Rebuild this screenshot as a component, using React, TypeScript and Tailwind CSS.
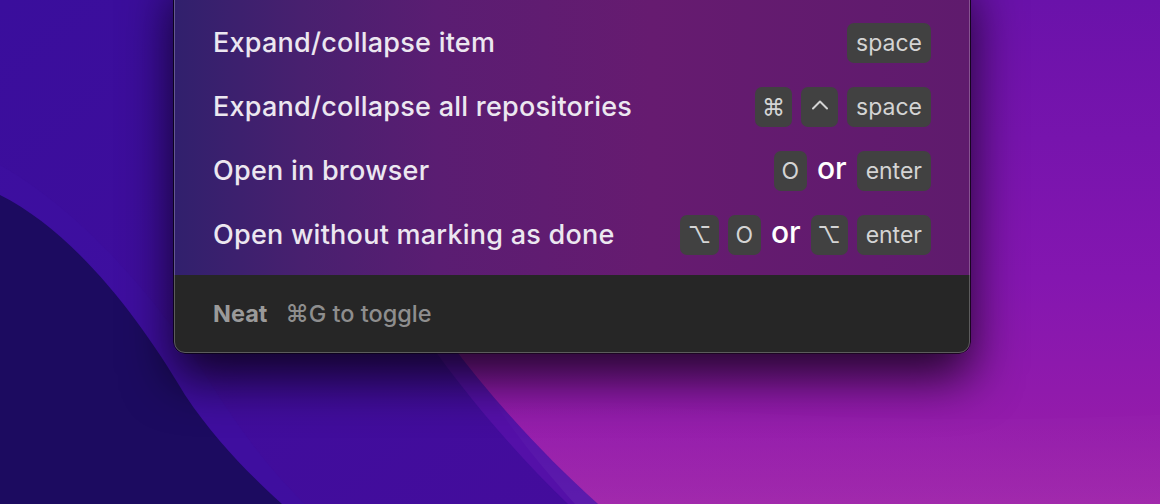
import React from "react";

function Key({ children, w }: { children: React.ReactNode; w?: string }) {
  return (
    <span
      className={`flex h-[40px] items-center justify-center rounded-[7px] bg-[#414141] text-[23px] leading-none text-[#d4d4d4] ${
        w ?? "px-[9px]"
      }`}
    >
      {children}
    </span>
  );
}

function Or() {
  return <span className="px-[1px] text-[30px] font-medium leading-none text-white -mt-[6px]">or</span>;
}

function Caret() {
  return (
    <svg width="18" height="11" viewBox="0 0 18 11" className="-mt-[6px]">
      <polyline points="2,9.5 9,2.5 16,9.5" fill="none" stroke="#d4d4d4" strokeWidth="2" strokeLinecap="round" strokeLinejoin="round" />
    </svg>
  );
}

function Row({ label, children }: { label: string; children: React.ReactNode }) {
  return (
    <div className="flex h-16 items-center justify-between">
      <span className="text-[27px] font-medium tracking-[0.25px] text-[#ece7f0]">{label}</span>
      <div className="flex items-center gap-[9px]">{children}</div>
    </div>
  );
}

function Wallpaper() {
  return (
    <svg className="absolute inset-0" width="1160" height="504" viewBox="0 0 1160 504">
      <defs>
        <linearGradient id="base" x1="0" y1="0" x2="1" y2="0">
          <stop offset="0" stopColor="#300d8f" />
          <stop offset="0.3" stopColor="#3a0f9e" />
          <stop offset="0.7" stopColor="#5510a6" />
          <stop offset="1" stopColor="#6c13aa" />
        </linearGradient>
        <linearGradient id="pink" x1="0" y1="0" x2="0" y2="1">
          <stop offset="0" stopColor="#6a12aa" />
          <stop offset="0.55" stopColor="#8416b0" />
          <stop offset="1" stopColor="#9c1ea8" />
        </linearGradient>
        <linearGradient id="blue" x1="0" y1="0" x2="1" y2="1">
          <stop offset="0" stopColor="#3a0e9c" />
          <stop offset="1" stopColor="#440c9c" />
        </linearGradient>
        <linearGradient id="wave" x1="0" y1="0" x2="0" y2="1">
          <stop offset="0" stopColor="#ffffff" stopOpacity="0" />
          <stop offset="1" stopColor="#ffffff" stopOpacity="0.05" />
        </linearGradient>
      </defs>
      <rect width="1160" height="504" fill="url(#base)" />
      <path d="M280 0 C 360 200, 460 380, 600 504 L 0 504 L 0 0 Z" fill="url(#blue)" />
      <path d="M330 180 C 390 300, 480 420, 568 504 L 598 504 C 515 430, 420 320, 362 200 Z" fill="#5410a8" />
      <path d="M362 200 C 420 320, 515 430, 598 504 L 1160 504 L 1160 0 L 650 0 Z" fill="url(#pink)" />
      <path d="M490 395 C 620 400, 820 430, 1160 415 L 1160 504 L 575 504 C 545 470, 515 435, 490 395 Z" fill="url(#wave)" />
      <path d="M0 165 C 80 210, 160 300, 215 390 C 250 445, 280 480, 305 504 L 0 504 Z" fill="#3d10a2" opacity="0.5" />
      <path d="M0 195 C 70 230, 135 310, 185 395 C 215 440, 250 475, 282 504 L 0 504 Z" fill="#1c0b60" />
    </svg>
  );
}

export default function App() {
  return (
    <div className="relative h-[504px] w-[1160px] overflow-hidden font-['Inter','Noto_Sans',sans-serif]">
      <Wallpaper />
      <div className="relative ml-[173px] -mt-[30px] w-[798px] overflow-hidden rounded-b-[12px] border border-black/80 shadow-[0_24px_50px_rgba(0,0,0,0.75)]">
        <div className="bg-[linear-gradient(90deg,#31206d_0%,#48206f_16%,#5a1d72_33%,#661b70_60%,#5f1b6d_100%)] px-[39px] pt-[40px] pb-2">
          <Row label="Expand/collapse item">
            <Key>space</Key>
          </Row>
          <Row label="Expand/collapse all repositories">
            <Key w="w-[37px]">⌘</Key>
            <Key w="w-[37px]">
              <Caret />
            </Key>
            <Key>space</Key>
          </Row>
          <Row label="Open in browser">
            <Key w="w-[33px]">O</Key>
            <Or />
            <Key>enter</Key>
          </Row>
          <Row label="Open without marking as done">
            <Key w="w-[39px]">⌥</Key>
            <Key w="w-[33px]">O</Key>
            <Or />
            <Key w="w-[37px]">⌥</Key>
            <Key>enter</Key>
          </Row>
        </div>
        <div className="flex h-[78px] items-center gap-[18px] bg-[#262626] px-[39px]">
          <span className="text-[23.5px] font-bold text-[#9a9a9a]">Neat</span>
          <span className="text-[23.5px] font-medium text-[#8e8e8e]">⌘G to toggle</span>
        </div>
        <div className="pointer-events-none absolute inset-0 rounded-b-[11px] border border-white/25" />
      </div>
    </div>
  );
}
